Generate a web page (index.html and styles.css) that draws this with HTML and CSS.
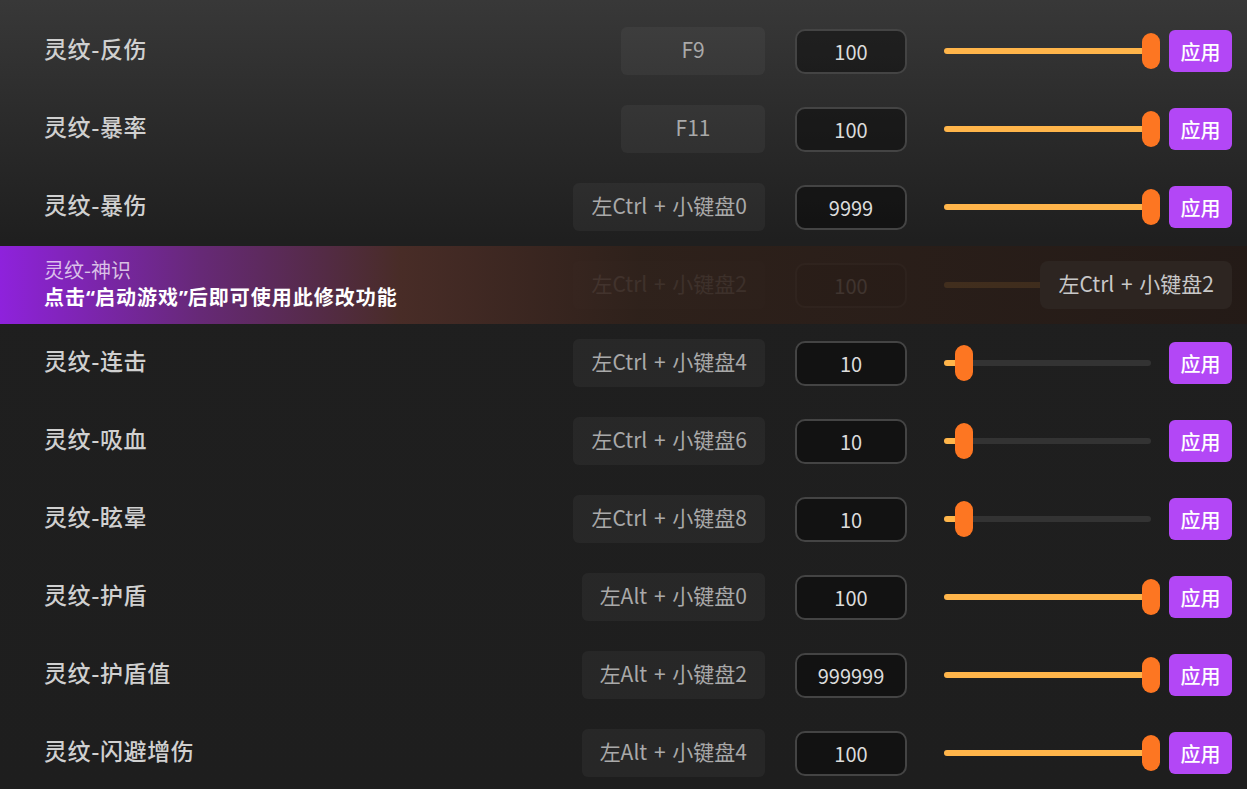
FILE: index.html
```html
<!DOCTYPE html>
<html lang="zh-CN">
<head>
  <meta charset="utf-8">
  <title>灵纹设置</title>
  <link rel="stylesheet" href="styles.css">
</head>
<body>
  <main class="panel">
    <div class="row">
      <div class="label">灵纹-反伤</div>
      <div class="hotkey">F9</div>
      <div class="num">100</div>
      <div class="slider" style="--p: 1"><span class="fill"></span><span class="thumb"></span></div>
      <button class="apply">应用</button>
    </div>
    <div class="row">
      <div class="label">灵纹-暴率</div>
      <div class="hotkey">F11</div>
      <div class="num">100</div>
      <div class="slider" style="--p: 1"><span class="fill"></span><span class="thumb"></span></div>
      <button class="apply">应用</button>
    </div>
    <div class="row">
      <div class="label">灵纹-暴伤</div>
      <div class="hotkey">左Ctrl + 小键盘0</div>
      <div class="num">9999</div>
      <div class="slider" style="--p: 1"><span class="fill"></span><span class="thumb"></span></div>
      <button class="apply">应用</button>
    </div>
    <div class="row locked">
      <div class="label">灵纹-神识</div>
      <div class="hotkey">左Ctrl + 小键盘2</div>
      <div class="num">100</div>
      <div class="slider" style="--p: 1"><span class="fill"></span><span class="thumb"></span></div>
      <button class="apply">应用</button>
      <div class="lock-mask">
        <div class="lock-text">
          <div class="lock-name">灵纹-神识</div>
          <div class="lock-tip">点击<span class="q">“</span>启动游戏<span class="q">”</span>后即可使用此修改功能</div>
        </div>
        <div class="hotkey hotkey-tip">左Ctrl + 小键盘2</div>
      </div>
    </div>
    <div class="row">
      <div class="label">灵纹-连击</div>
      <div class="hotkey">左Ctrl + 小键盘4</div>
      <div class="num">10</div>
      <div class="slider" style="--p: 0.055"><span class="fill"></span><span class="thumb"></span></div>
      <button class="apply">应用</button>
    </div>
    <div class="row">
      <div class="label">灵纹-吸血</div>
      <div class="hotkey">左Ctrl + 小键盘6</div>
      <div class="num">10</div>
      <div class="slider" style="--p: 0.055"><span class="fill"></span><span class="thumb"></span></div>
      <button class="apply">应用</button>
    </div>
    <div class="row">
      <div class="label">灵纹-眩晕</div>
      <div class="hotkey">左Ctrl + 小键盘8</div>
      <div class="num">10</div>
      <div class="slider" style="--p: 0.055"><span class="fill"></span><span class="thumb"></span></div>
      <button class="apply">应用</button>
    </div>
    <div class="row">
      <div class="label">灵纹-护盾</div>
      <div class="hotkey">左Alt + 小键盘0</div>
      <div class="num">100</div>
      <div class="slider" style="--p: 1"><span class="fill"></span><span class="thumb"></span></div>
      <button class="apply">应用</button>
    </div>
    <div class="row">
      <div class="label">灵纹-护盾值</div>
      <div class="hotkey">左Alt + 小键盘2</div>
      <div class="num">999999</div>
      <div class="slider" style="--p: 1"><span class="fill"></span><span class="thumb"></span></div>
      <button class="apply">应用</button>
    </div>
    <div class="row">
      <div class="label">灵纹-闪避增伤</div>
      <div class="hotkey">左Alt + 小键盘4</div>
      <div class="num">100</div>
      <div class="slider" style="--p: 1"><span class="fill"></span><span class="thumb"></span></div>
      <button class="apply">应用</button>
    </div>
  </main>
</body>
</html>
```

FILE: styles.css
```css
html,body{
  width: 100%;
  height: 100%;
  margin: 0;
  padding: 0;
  overflow: hidden;
  background: #1e1e1e;
  font-family: "Noto Sans CJK SC", "Noto Sans", sans-serif;
}
.panel{
  padding-top: 12px;
  min-height: 100%;
  box-sizing: border-box;
  background: linear-gradient(180deg, #383838 0, #2c2c2c 110px, #1f1f1f 240px, #1e1e1e 100%);
}
.row{
  position: relative;
  display: flex;
  align-items: center;
  height: 78px;
  padding: 0 15px 0 44px;
}
.label{
  flex: 1;
  font-size: 23px;
  font-weight: 500;
  letter-spacing: 0.6px;
  color: #d0d0d0;
  padding-bottom: 6px;
}
.hotkey{
  min-width: 108px;
  height: 48px;
  line-height: 45px;
  padding: 0 18px;
  border-radius: 6px;
  background: rgba(255,255,255,0.045);
  color: #a9a9a9;
  font-size: 21px;
  word-spacing: 2px;
  text-align: center;
  white-space: nowrap;
}
.num{
  width: 108px;
  height: 41px;
  line-height: 41px;
  margin-left: 30px;
  border: 2px solid #444;
  border-radius: 10px;
  background: rgba(0,0,0,0.4);
  color: #dcdcdc;
  font-size: 20px;
  text-align: center;
}
.slider{
  position: relative;
  width: 216px;
  height: 36px;
  margin-left: 37px;
}
.slider::before{
  content: "";
  position: absolute;
  left: 0;
  right: 9px;
  top: 15px;
  height: 6px;
  border-radius: 3px;
  background: #333;
}
.fill{
  position: absolute;
  left: 0;
  top: 15px;
  height: 6px;
  width: calc(9px + 198px * var(--p));
  border-radius: 3px;
  background: #ffb54a;
}
.thumb{
  position: absolute;
  top: 0;
  left: calc(198px * var(--p));
  width: 18px;
  height: 36px;
  border-radius: 9px;
  background: #fd7622;
}
.apply{
  width: 63px;
  height: 42px;
  margin-left: 9px;
  padding: 0;
  border: 0;
  border-radius: 6px;
  background: #b347f6;
  color: #fff;
  font-family: inherit;
  font-size: 20px;
  font-weight: 500;
  cursor: pointer;
}
.locked .label,
.locked .apply{
  visibility: hidden;
}
.lock-mask{
  position: absolute;
  inset: 0;
  display: flex;
  align-items: center;
  justify-content: space-between;
  padding: 0 15px 0 44px;
  background: linear-gradient(90deg, rgba(146,34,226,0.97) 0, rgba(110,42,128,0.9) 200px, rgba(78,46,40,0.88) 400px, rgba(48,33,26,0.88) 640px, rgba(36,26,22,0.9) 100%);
}
.lock-text{
  padding-bottom: 2px;
}
.lock-name{
  font-size: 20px;
  color: rgba(255,255,255,0.72);
  line-height: 26px;
}
.lock-tip{
  font-size: 20px;
  font-weight: 700;
  letter-spacing: 1px;
  color: #fff;
  line-height: 27px;
}
.lock-tip .q{
  font-family: "Noto Sans", sans-serif;
  letter-spacing: 0;
}
.hotkey-tip{
  background: #2d2521;
  color: #c8c8c8;
  border-radius: 8px;
}
```
